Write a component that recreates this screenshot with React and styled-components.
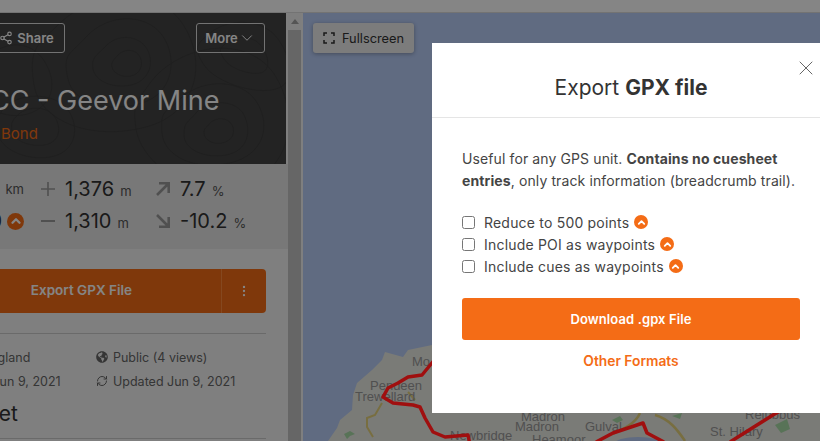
import React from 'react'
import styled, { createGlobalStyle } from 'styled-components'
import {
  Share2,
  ChevronDown,
  ChevronUp,
  EllipsisVertical,
  RefreshCw,
  X,
} from 'lucide-react'
import { FaGlobeAmericas } from 'react-icons/fa'

const Global = createGlobalStyle`
  html, body {
    margin: 0;
    padding: 0;
    background: #fff;
  }
  * {
    box-sizing: border-box;
  }
`

const Page = styled.div`
  position: relative;
  width: 820px;
  height: 441px;
  overflow: hidden;
  display: flex;
  flex-direction: column;
  font-family: Inter, "Liberation Sans", sans-serif;
  color: #333;
`

const TopStrip = styled.div`
  height: 13px;
  flex: none;
  background: #fff;
  border-bottom: 1px solid #ddd;
`

const Main = styled.div`
  flex: 1;
  display: flex;
  min-height: 0;
`

const LeftPane = styled.div`
  width: 288px;
  flex: none;
  overflow: hidden;
  background: #f4f4f4;
`

const Hero = styled.div`
  position: relative;
  width: 286px;
  height: 151px;
  background: #434343;
  overflow: hidden;
  padding-top: 10px;
`

const Contours = styled.svg`
  position: absolute;
  inset: 0;
  width: 100%;
  height: 100%;
`

const HeroRow = styled.div`
  position: relative;
  display: flex;
  justify-content: space-between;
  margin: 0 21px 0 -12px;
`

const HeroButton = styled.div`
  height: 30px;
  display: flex;
  align-items: center;
  justify-content: center;
  gap: ${(p) => p.$gap}px;
  width: ${(p) => p.$w}px;
  border: 1px solid #ddd;
  border-radius: 3px;
  color: #fff;
  font-size: 13px;
  font-weight: 600;
`

const Title = styled.h1`
  position: relative;
  margin: 32px 0 0 -10px;
  font-size: 27px;
  line-height: 32px;
  font-weight: 400;
  color: #fff;
  white-space: nowrap;
`

const Owner = styled.div`
  position: relative;
  margin: 7px 0 0 1px;
  font-size: 15px;
  line-height: 20px;
  color: #f46c16;
`

const Stats = styled.div`
  height: 85px;
  background: #e6e6e6;
  padding-top: 9px;
`

const StatRow = styled.div`
  display: grid;
  grid-template-columns: 40px 115px 1fr;
  height: 32px;
  align-items: center;
`

const StatCell = styled.div`
  display: flex;
  align-items: baseline;
  white-space: nowrap;
`

const FirstCell = styled.div`
  display: flex;
  align-items: center;
  justify-content: flex-end;
  gap: 5px;
  padding-right: 16px;
  white-space: nowrap;
`

const StatIcon = styled.svg`
  width: 14px;
  height: 14px;
  flex: none;
  align-self: center;
  margin: 0 10px 0 1px;
  fill: none;
  stroke: #9a9a9a;
  stroke-width: ${(p) => p.$stroke};
`

const Value = styled.span`
  font-size: 20px;
  color: #333;
`

const Unit = styled.span`
  font-size: 13px;
  color: #555;
  margin-left: 6px;
`

const Badge = styled.span`
  width: ${(p) => p.$size}px;
  height: ${(p) => p.$size}px;
  flex: none;
  border-radius: 50%;
  background: #f46c16;
  color: #fff;
  display: inline-flex;
  align-items: center;
  justify-content: center;
`

const Body = styled.div`
  padding: 20px 22px 0 0;
`

const ExportBar = styled.div`
  display: flex;
  height: 44px;
  background: #f46c16;
  border-radius: 0 4px 4px 0;
  color: #fff;
  font-size: 13.5px;
  font-weight: 600;
`

const ExportLabel = styled.div`
  flex: 1;
  display: flex;
  align-items: center;
  justify-content: flex-end;
  padding: 0 89px 2px 0;
  white-space: nowrap;
`

const ExportMore = styled.div`
  width: 45px;
  display: flex;
  align-items: center;
  justify-content: center;
  border-left: 1px solid #ff8a3c;
`

const Rule = styled.div`
  height: 1px;
  background: #ccc;
  margin-top: ${(p) => p.$mt}px;
`

const InfoGrid = styled.div`
  display: grid;
  grid-template-columns: 154px 1fr;
  grid-auto-rows: 24px;
  margin: 11px 0 0 -58px;
  font-size: 12.5px;
  color: #666;
  align-items: center;
`

const InfoCell = styled.div`
  display: flex;
  align-items: center;
  gap: 5px;
  white-space: nowrap;
`

const Heading = styled.div`
  font-size: 21px;
  line-height: 26px;
  margin: 8px 0 11px -77px;
  color: #333;
  white-space: nowrap;
`

const Scrollbar = styled.div`
  width: 13px;
  flex: none;
  background: #c4c4c4;
  display: flex;
  flex-direction: column;
`

const ScrollArrow = styled.div`
  height: 17px;
  background: #f1f1f1;
  display: flex;
  justify-content: center;
  padding-top: 6px;
  &::before {
    content: "";
    border-left: 4px solid transparent;
    border-right: 4px solid transparent;
    border-bottom: 5px solid #a3a3a3;
    height: 0;
  }
`

const Gutter = styled.div`
  width: 2px;
  flex: none;
  background: #f4f4f4;
`

const MapArea = styled.div`
  position: relative;
  flex: 1;
  background: #b8cdf8;
  overflow: hidden;
`

const MapSvg = styled.svg`
  display: block;
  width: 100%;
  height: 100%;
`

const MapLabel = styled.text`
  font-family: "Liberation Sans", sans-serif;
  font-size: 13px;
  fill: #9a9a9a;
`

const FullscreenButton = styled.div`
  position: absolute;
  left: 10px;
  top: 10px;
  width: 101px;
  height: 30px;
  display: flex;
  align-items: center;
  gap: 7px;
  padding-left: 10px;
  background: #eee;
  border-radius: 3px;
  box-shadow: 0 1px 4px rgba(0, 0, 0, 0.3);
  font-size: 12.8px;
  color: #333;
`

const Backdrop = styled.div`
  position: absolute;
  inset: 0;
  background: rgba(0, 0, 0, 0.48);
`

// route line stays bright through the dimmed page
const RouteLayer = styled.svg`
  position: absolute;
  inset: 0;
  width: 820px;
  height: 441px;
  fill: none;
  stroke: #a00f0f;
  stroke-width: 3.5;
  stroke-linejoin: round;
`

const Modal = styled.div`
  position: absolute;
  left: 432px;
  top: 43px;
  width: 398px;
  height: 370px;
  background: #fff;
`

const ModalHead = styled.div`
  height: 75px;
  padding-top: 14px;
  border-bottom: 1px solid #e5e5e5;
  display: flex;
  align-items: center;
  justify-content: center;
  font-size: 21px;
  color: #333;
  white-space: pre;
`

const CloseButton = styled.div`
  position: absolute;
  left: 362px;
  top: 13px;
  color: #555;
  display: flex;
`

const ModalBody = styled.div`
  padding: 30px 30px 0;
`

const Intro = styled.p`
  margin: 0 0 19px;
  font-size: 14px;
  line-height: 22px;
  letter-spacing: 0.11px;
  color: #444;
`

const OptionRow = styled.label`
  display: flex;
  align-items: center;
  height: 22px;
  font-size: 14px;
  letter-spacing: 0.2px;
  color: #444;
`

const Check = styled.input`
  width: 13px;
  height: 13px;
  margin: 0 9px 0 0;
`

const OptionText = styled.span`
  margin-right: 5px;
`

const Download = styled.div`
  height: 42px;
  margin-top: 21px;
  background: #f46c16;
  border-radius: 3px;
  color: #fff;
  font-size: 13px;
  letter-spacing: 0.1px;
  font-weight: 600;
  display: flex;
  align-items: center;
  justify-content: center;
`

const OtherFormats = styled.div`
  margin-top: 13px;
  text-align: center;
  font-size: 13.8px;
  line-height: 16px;
  font-weight: 600;
  color: #f46c16;
`

const UpBadge = ({ size = 14 }) => (
  <Badge $size={size}>
    <ChevronUp size={size - 3} strokeWidth={4} />
  </Badge>
)

const FullscreenIcon = () => (
  <svg width="12" height="12" viewBox="0 0 12 12" fill="none" stroke="#333" strokeWidth="1.5">
    <path d="M1 4V1h3M8 1h3v3M11 8v3H8M4 11H1V8" />
  </svg>
)

const contourPaths = [
  'M118 42c7-7 18-6 22 2s0 17-9 19-18-3-19-9 2-7 6-12z',
  'M105 34c12-14 34-12 42 2s2 32-16 36-36-4-38-16 4-14 12-22z',
  'M86 24c22-24 60-24 76-2s12 58-20 68-68 2-74-24 2-24 18-42z',
  'M60 10c34-32 96-38 122 0s16 90-36 104-106-4-112-42 4-40 26-62z',
  'M210 110c6-6 18-6 22 2s0 16-10 18-18-4-18-10 2-4 6-10z',
  'M196 100c12-14 40-14 48 2s4 36-18 40-42-6-42-20 4-12 12-22z',
  'M178 88c20-22 62-24 78 0s8 54-26 62-66-6-68-30 4-20 16-32z',
  'M150 70c30-40 100-50 126-6s12 100-42 110-94-30-98-58 2-28 14-46z',
  'M210 20c20-16 54-14 68 6s18 44-2 50-60-6-72-24-6-22 6-32z',
  'M226 30c10-8 28-8 36 4s8 24-2 26-30-4-36-14-4-10 2-16z',
  'M10 90c20-12 50-8 60 10s4 40-20 44-50-8-52-24 2-22 12-30z',
  'M20 100c12-8 30-6 36 6s2 24-12 26-30-4-32-14 2-12 8-18z',
  'M-20 50c30-30 60-20 70 10s-20 50-50 40-40-30-20-50z',
]

const App = () => (
  <>
    <Global />
    <Page>
      <TopStrip />
      <Main>
        <LeftPane>
          <Hero>
            <Contours viewBox="0 0 286 151" fill="none" stroke="#3b3b3b" strokeWidth="0.7">
              {contourPaths.map((d) => (
                <path key={d} d={d} />
              ))}
            </Contours>
            <HeroRow>
              <HeroButton $w={77} $gap={4}>
                <Share2 size={14} strokeWidth={2} />
                Share
              </HeroButton>
              <HeroButton $w={69} $gap={0}>
                More
                <ChevronDown size={18} strokeWidth={1.3} />
              </HeroButton>
            </HeroRow>
            <Title>CC - Geevor Mine</Title>
            <Owner>Bond</Owner>
          </Hero>
          <Stats>
            <StatRow>
              <FirstCell>
                <Value>3</Value>
                <Unit>km</Unit>
              </FirstCell>
              <StatCell>
                <StatIcon viewBox="0 0 14 14" $stroke={1.6}><path d="M7 0V14M0 7H14" /></StatIcon>
                <Value>1,376</Value>
                <Unit>m</Unit>
              </StatCell>
              <StatCell>
                <StatIcon viewBox="0 0 14 14" $stroke={2.6}><path d="M1 13L12 2M3 1.3H12.7V11" /></StatIcon>
                <Value>7.7</Value>
                <Unit>%</Unit>
              </StatCell>
            </StatRow>
            <StatRow>
              <FirstCell>
                <Value>0</Value>
                <UpBadge size={17} />
              </FirstCell>
              <StatCell>
                <StatIcon viewBox="0 0 14 14" $stroke={2}><path d="M0 7H14" /></StatIcon>
                <Value>1,310</Value>
                <Unit>m</Unit>
              </StatCell>
              <StatCell>
                <StatIcon viewBox="0 0 14 14" $stroke={2.6}><path d="M1 1L12 12M12.7 3V12.7H3" /></StatIcon>
                <Value>-10.2</Value>
                <Unit>%</Unit>
              </StatCell>
            </StatRow>
          </Stats>
          <Body>
            <ExportBar>
              <ExportLabel>Export GPX File</ExportLabel>
              <ExportMore><EllipsisVertical size={14} /></ExportMore>
            </ExportBar>
            <Rule $mt={20} />
            <InfoGrid>
              <InfoCell>Hayle, England</InfoCell>
              <InfoCell><FaGlobeAmericas size={12} /> Public (4 views)</InfoCell>
              <InfoCell>Created Jun 9, 2021</InfoCell>
              <InfoCell><RefreshCw size={12} /> Updated Jun 9, 2021</InfoCell>
            </InfoGrid>
            <Heading>Cuesheet</Heading>
            <Rule $mt={0} />
          </Body>
        </LeftPane>
        <Scrollbar>
          <ScrollArrow />
        </Scrollbar>
        <Gutter />
        <MapArea>
          <MapSvg viewBox="303 13 517 428">
            <path
              d="M820 300L432 345 408 350 403 357 385 352 382 360 372 370 357 383 353 395 352 410 340 420 337 428 328 441H820Z"
              fill="#eaebe4"
            />
            <ellipse cx="638" cy="444" rx="24" ry="7" fill="#b8cdf8" />
            <path d="M344 434l6-3 5 3-5 2-3 3z" fill="#a9dca8" />
            <path d="M382 403l-7 12-8 3v9l6 10" fill="none" stroke="#e6d37c" strokeWidth="2" />
            <path d="M408 392l7 8" fill="none" stroke="#e6d37c" strokeWidth="2" />
            <path d="M640 413c-4 10-16 16-30 22M655 415c14 4 22 14 30 26" fill="none" stroke="#e6d37c" strokeWidth="2.5" />
            <path d="M612 420l8-4 3 4-6 3zM672 416l10-3-2 6zM775 425l12-6 3 10-9 4z" fill="#a9dca8" />
            <MapLabel x="412" y="366">Mo</MapLabel>
            <MapLabel x="370" y="390">Pendeen</MapLabel>
            <MapLabel x="355" y="401">Trewellard</MapLabel>
            <MapLabel x="521" y="421">Madron</MapLabel>
            <MapLabel x="515" y="431">Madron</MapLabel>
            <MapLabel x="450" y="440">Newbridge</MapLabel>
            <MapLabel x="532" y="444">Heamoor</MapLabel>
            <MapLabel x="585" y="431">Gulval</MapLabel>
            <MapLabel x="710" y="436">St. Hilary</MapLabel>
            <MapLabel x="745" y="419">Relubbus</MapLabel>
          </MapSvg>
          <FullscreenButton>
            <FullscreenIcon />
            Fullscreen
          </FullscreenButton>
        </MapArea>
      </Main>
      <Backdrop />
      <RouteLayer viewBox="0 0 820 441">
        <path d="M436 358L422 375 408 377 398 383 388 388 383 397 393 403 413 405 420 407 425 418 433 432 445 437 468 435 470 445" />
        <path d="M596 442L613 433 643 423 647 433 664 442M730 442L773 415 790 405" />
      </RouteLayer>
      <Modal>
        <ModalHead>
          Export <b>GPX file</b>
        </ModalHead>
        <CloseButton><X size={24} strokeWidth={0.9} /></CloseButton>
        <ModalBody>
          <Intro>
            Useful for any GPS unit. <b>Contains no cuesheet entries</b>, only track information (breadcrumb trail).
          </Intro>
          <OptionRow>
            <Check type="checkbox" />
            <OptionText>Reduce to 500 points</OptionText>
            <UpBadge />
          </OptionRow>
          <OptionRow>
            <Check type="checkbox" />
            <OptionText>Include POI as waypoints</OptionText>
            <UpBadge />
          </OptionRow>
          <OptionRow>
            <Check type="checkbox" />
            <OptionText>Include cues as waypoints</OptionText>
            <UpBadge />
          </OptionRow>
          <Download>Download .gpx File</Download>
          <OtherFormats>Other Formats</OtherFormats>
        </ModalBody>
      </Modal>
    </Page>
  </>
)

export default App
